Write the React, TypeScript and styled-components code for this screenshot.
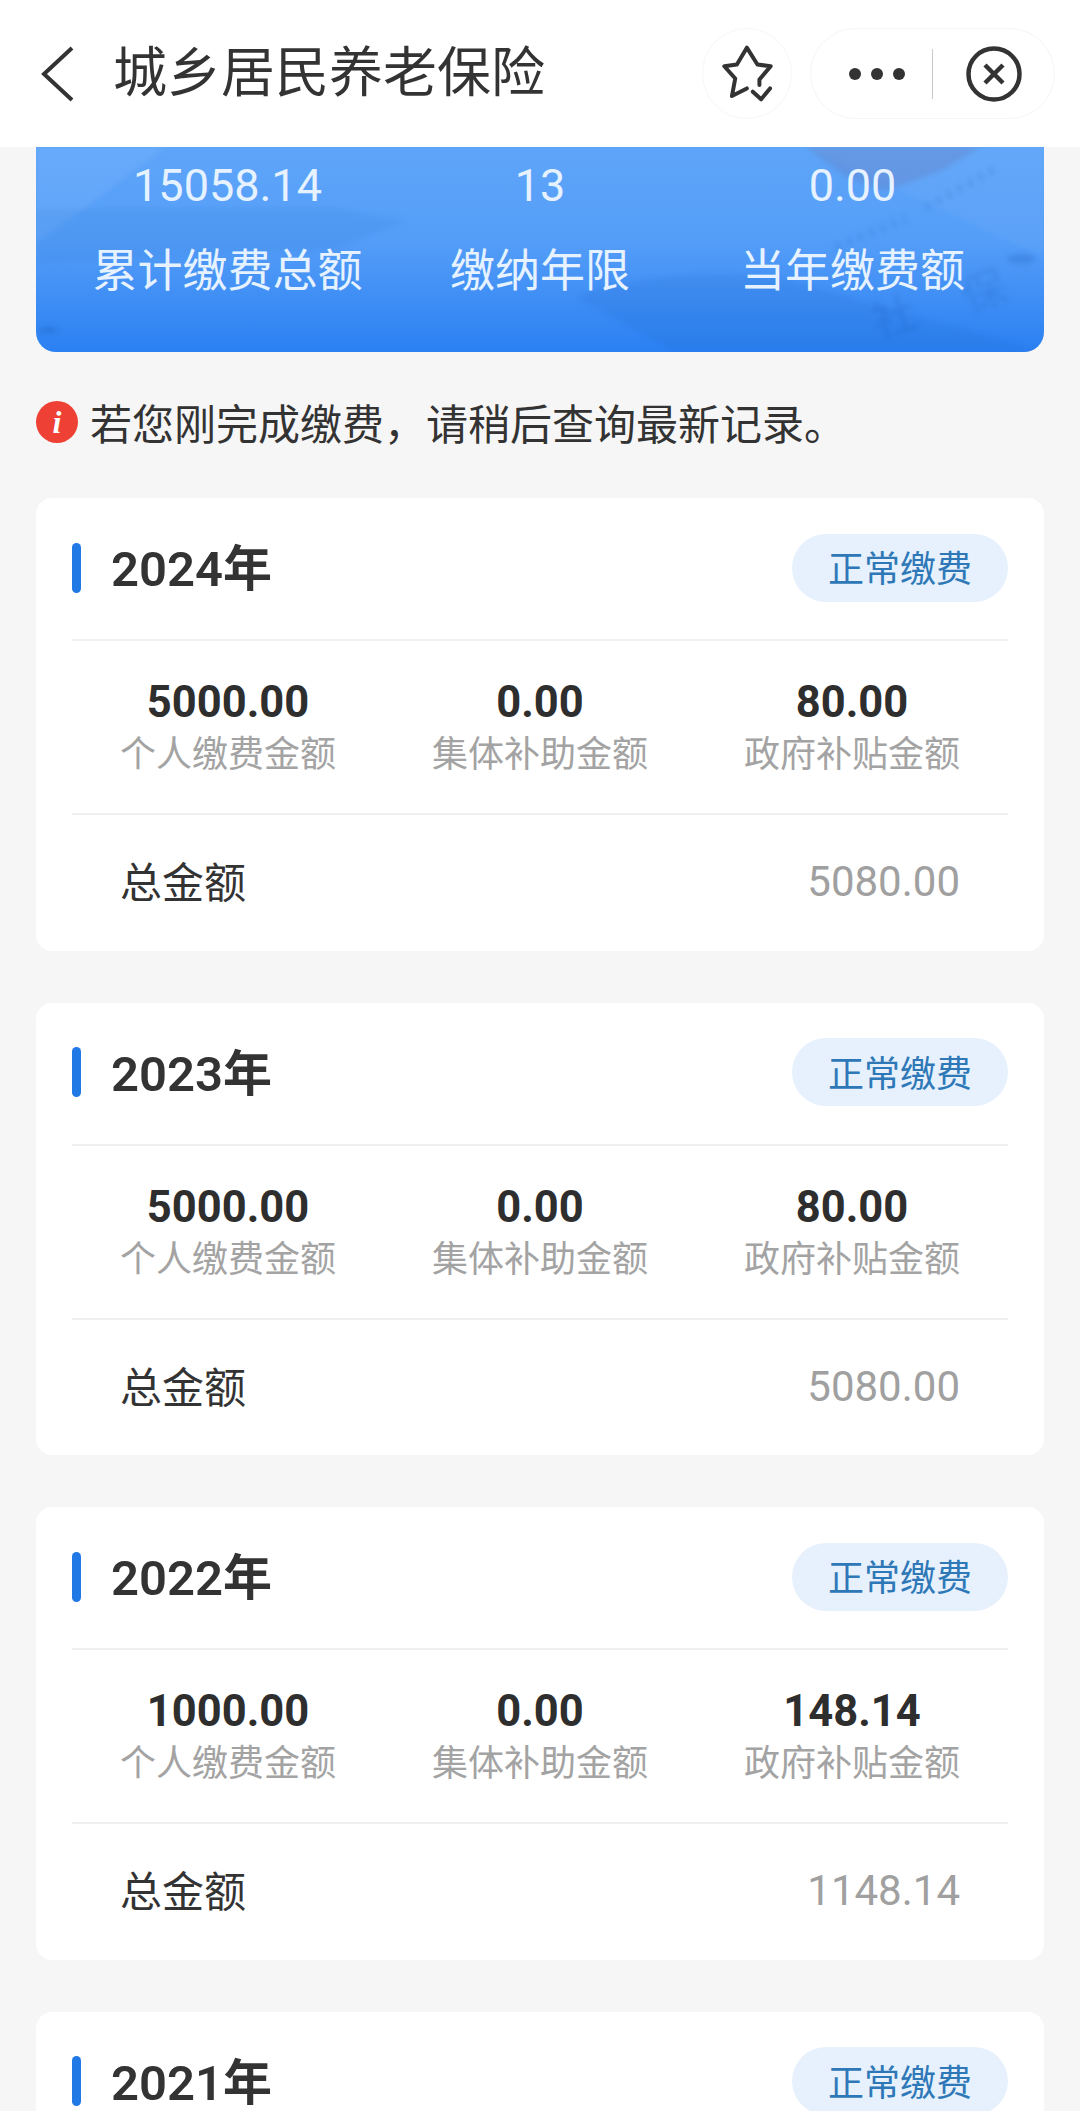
import { FC } from 'react';
import styled, { createGlobalStyle } from 'styled-components';

const GlobalStyle = createGlobalStyle`
  html, body {
    margin: 0;
    padding: 0;
    background: #f6f6f6;
  }
  * {
    box-sizing: border-box;
  }
`;

const fontStack = `Roboto, "Noto Sans CJK SC", sans-serif`;

const Page = styled.div`
  width: 1080px;
  height: 2111px;
  overflow: hidden;
  background: #f6f6f6;
  font-family: ${fontStack};
  color: #333;
`;

const NavBar = styled.header`
  display: flex;
  align-items: center;
  height: 147px;
  padding: 0 25px 0 40px;
  background: #fff;
`;

const BackButton = styled.svg`
  width: 34px;
  height: 56px;
  flex: none;
`;

const NavTitle = styled.h1`
  flex: 1;
  margin: 0 0 0 39px;
  font-size: 54px;
  font-weight: 400;
  line-height: 1;
  color: #333;
`;

const RoundButton = styled.div`
  display: flex;
  align-items: center;
  justify-content: center;
  width: 90px;
  height: 91px;
  margin-right: 18px;
  border: 1px solid #f7f7f7;
  border-radius: 50%;
`;

const Capsule = styled.div`
  display: flex;
  align-items: center;
  width: 245px;
  height: 91px;
  padding-left: 38px;
  border: 1px solid #f5f5f5;
  border-radius: 46px;
`;

const Dots = styled.div`
  display: flex;
  gap: 10px;
  width: 83px;
`;

const Dot = styled.span`
  width: 12px;
  height: 12px;
  border-radius: 50%;
  background: #333;
`;

const CapsuleDivider = styled.span`
  width: 1px;
  height: 50px;
  background: #c9c9c9;
`;

const CloseIcon = styled.svg`
  width: 56px;
  height: 56px;
  margin-left: 33px;
`;

const Content = styled.main`
  padding: 0 36px;
`;

const Banner = styled.section`
  position: relative;
  display: grid;
  grid-template-columns: 383px 242px 383px;
  height: 205px;
  overflow: hidden;
  border-radius: 0 0 20px 20px;
  background: linear-gradient(180deg, #5ea5f9 0%, #559ef8 45%, #2b80f2 100%);
`;

const BannerArt = styled.svg`
  position: absolute;
  inset: 0;
  width: 100%;
  height: 100%;
  filter: blur(2.5px);
`;

const BannerStat = styled.div`
  position: relative;
  display: flex;
  flex-direction: column;
  align-items: center;
  padding-top: 12px;
  color: #e6f2ff;
`;

const BannerValue = styled.div`
  font-size: 45px;
  font-weight: 400;
  line-height: 54px;
`;

const BannerLabel = styled.div`
  margin-top: 33px;
  font-size: 45px;
  line-height: 52px;
`;

const Notice = styled.div`
  display: flex;
  align-items: center;
  height: 146px;
  padding-bottom: 6px;
  font-size: 42px;
  color: #333;
`;

const NoticeText = styled.span`
  padding-bottom: 2px;
`;

const NoticeIcon = styled.span`
  display: flex;
  flex: none;
  align-items: center;
  justify-content: center;
  width: 42px;
  height: 42px;
  margin-right: 12px;
  border-radius: 50%;
  background: #ee4035;
  color: #fff;
  font-family: "Liberation Serif", serif;
  font-size: 32px;
  font-style: italic;
  font-weight: 700;
`;

const CardList = styled.div`
  display: flex;
  flex-direction: column;
  gap: 52px;
`;

const Card = styled.article`
  height: 452.5px;
  padding: 0 36px;
  border-radius: 16px;
  background: #fff;
`;

const CardHeader = styled.div`
  display: flex;
  align-items: center;
  justify-content: space-between;
  height: 143px;
  padding-bottom: 2px;
  border-bottom: 2px solid #efefef;
`;

const YearGroup = styled.div`
  display: flex;
  align-items: center;
`;

const YearMark = styled.span`
  width: 9px;
  height: 50px;
  margin-right: 30px;
  border-radius: 5px;
  background: #2079e4;
`;

const YearText = styled.span`
  padding-bottom: 6px;
  font-size: 49px;
  font-weight: 600;
  color: #333;
`;

const StatusTag = styled.span`
  display: flex;
  align-items: center;
  justify-content: center;
  width: 216px;
  height: 68px;
  padding-bottom: 3px;
  border-radius: 34px;
  background: #e6f1fd;
  font-size: 36px;
  color: #2f78b8;
`;

const AmountRow = styled.div`
  display: grid;
  grid-template-columns: repeat(3, 312px);
  height: 174px;
  padding-top: 36px;
  border-bottom: 2px solid #efefef;
`;

const AmountCell = styled.div`
  display: flex;
  flex-direction: column;
  align-items: center;
`;

const AmountValue = styled.div`
  font-size: 43.500px;
  font-weight: 700;
  line-height: 52px;
  color: #2e2e2e;
`;

const AmountLabel = styled.div`
  font-size: 36px;
  line-height: 52px;
  color: #a3a3a3;
`;

const TotalRow = styled.div`
  display: flex;
  align-items: center;
  justify-content: space-between;
  height: 133px;
  padding: 0 48px;
`;

const TotalLabel = styled.span`
  padding-bottom: 4px;
  font-size: 42px;
  color: #333;
`;

const TotalValue = styled.span`
  font-size: 42px;
  color: #a0a0a0;
`;

type YearRecord = {
  year: number;
  personal: string;
  collective: string;
  government: string;
  total: string;
};

const records: YearRecord[] = [
  { year: 2024, personal: '5000.00', collective: '0.00', government: '80.00', total: '5080.00' },
  { year: 2023, personal: '5000.00', collective: '0.00', government: '80.00', total: '5080.00' },
  { year: 2022, personal: '1000.00', collective: '0.00', government: '148.14', total: '1148.14' },
];

const bannerStats = [
  { value: '15058.14', label: '累计缴费总额' },
  { value: '13', label: '缴纳年限' },
  { value: '0.00', label: '当年缴费额' },
];

const YearHeader: FC<{ year: number }> = ({ year }) => (
  <CardHeader>
    <YearGroup>
      <YearMark />
      <YearText>{year}年</YearText>
    </YearGroup>
    <StatusTag>正常缴费</StatusTag>
  </CardHeader>
);

const YearCard: FC<{ record: YearRecord }> = ({ record }) => (
  <Card>
    <YearHeader year={record.year} />
    <AmountRow>
      <AmountCell>
        <AmountValue>{record.personal}</AmountValue>
        <AmountLabel>个人缴费金额</AmountLabel>
      </AmountCell>
      <AmountCell>
        <AmountValue>{record.collective}</AmountValue>
        <AmountLabel>集体补助金额</AmountLabel>
      </AmountCell>
      <AmountCell>
        <AmountValue>{record.government}</AmountValue>
        <AmountLabel>政府补贴金额</AmountLabel>
      </AmountCell>
    </AmountRow>
    <TotalRow>
      <TotalLabel>总金额</TotalLabel>
      <TotalValue>{record.total}</TotalValue>
    </TotalRow>
  </Card>
);

const App: FC = () => (
  <Page>
    <GlobalStyle />
    <NavBar>
      <BackButton viewBox="0 0 34 56" fill="none" stroke="#333" strokeWidth="4">
        <path d="M32 2 4 28l28 26" />
      </BackButton>
      <NavTitle>城乡居民养老保险</NavTitle>
      <RoundButton>
        <svg
          width="53"
          height="59"
          viewBox="122 102 160 176"
          fill="none"
          stroke="#333"
          strokeWidth="12"
          strokeLinejoin="round"
          strokeLinecap="round"
        >
          <path d="M200 235 155 258 165 205 132 168 170 163 200 112 232 163 272 168 238 208 238 225" />
          <path d="M218 245 243 268 270 235" />
        </svg>
      </RoundButton>
      <Capsule>
        <Dots>
          <Dot />
          <Dot />
          <Dot />
        </Dots>
        <CapsuleDivider />
        <CloseIcon viewBox="0 0 56 56" fill="none" stroke="#333" strokeWidth="4.500">
          <circle cx="28" cy="28" r="25.500" />
          <path d="m19 19 18 18M37 19 19 37" />
        </CloseIcon>
      </Capsule>
    </NavBar>
    <Content>
      <Banner>
        <BannerArt viewBox="0 0 1008 205" fill="none">
          <path d="M0 0h130L50 60 0 95z" fill="#9cc8ff" opacity="0.16" />
          <path d="M0 62h300l70 12-70 28-300 14z" fill="#2d73d0" opacity="0.12" />
          <path d="M400 0h370l238 110V0z" fill="#fff" opacity="0.04" />
          <path d="M770 0h175l-40 24-55 20-40-14z" fill="#6a6cab" opacity="0.26" />
          <path d="M540 150q80-30 200-20l268 75H640z" fill="#1c62c4" opacity="0.14" />
          <path
            d="M800 100 870 72M890 60 960 22"
            stroke="#1f5fb8"
            strokeOpacity="0.16"
            strokeWidth="9"
            strokeDasharray="5 7"
          />
          <ellipse cx="12" cy="183" rx="10" ry="3" fill="#1c58ad" opacity="0.3" />
          <ellipse cx="985" cy="112" rx="14" ry="5" fill="#1c58ad" opacity="0.24" />
          <text x="836" y="186" fontSize="44" fill="#1a5bb5" opacity="0.24" transform="rotate(-18 858 170)">
            社
          </text>
          <text x="926" y="160" fontSize="44" fill="#1a5bb5" opacity="0.2" transform="rotate(-18 948 144)">
            保
          </text>
        </BannerArt>
        {bannerStats.map((stat) => (
          <BannerStat key={stat.label}>
            <BannerValue>{stat.value}</BannerValue>
            <BannerLabel>{stat.label}</BannerLabel>
          </BannerStat>
        ))}
      </Banner>
      <Notice>
        <NoticeIcon>i</NoticeIcon>
        <NoticeText>若您刚完成缴费，请稍后查询最新记录。</NoticeText>
      </Notice>
      <CardList>
        {records.map((record) => (
          <YearCard key={record.year} record={record} />
        ))}
        <Card>
          <YearHeader year={2021} />
        </Card>
      </CardList>
    </Content>
  </Page>
);

export default App;
